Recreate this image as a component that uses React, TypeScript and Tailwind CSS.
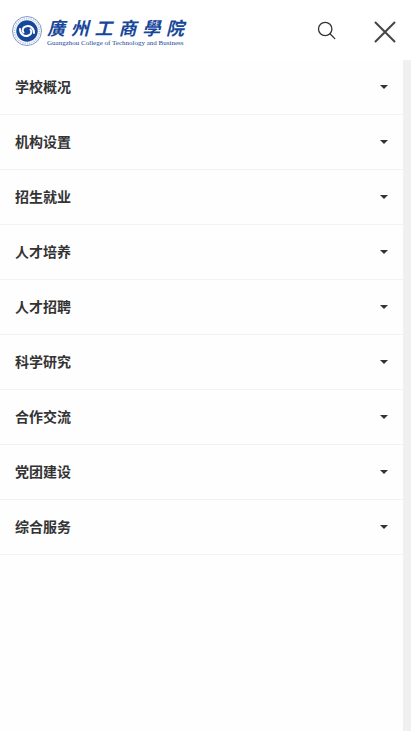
import { useState } from "react";

const MENU_ITEMS = [
    "学校概况",
    "机构设置",
    "招生就业",
    "人才培养",
    "人才招聘",
    "科学研究",
    "合作交流",
    "党团建设",
    "综合服务",
];

const SCHOOL_NAME = ["廣", "州", "工", "商", "學", "院"];

function Emblem() {
    return (
        <svg viewBox="0 0 60 60" className="size-[30px] shrink-0" aria-hidden="true">
            <circle cx="30" cy="30" r="29" fill="#fff" stroke="#5d80bb" strokeWidth="1.6" />
            <circle cx="30" cy="30" r="25" fill="none" stroke="#b9c9e3" strokeWidth="3.6" strokeDasharray="2.4 2.2" />
            <circle cx="30" cy="30" r="21.5" fill="#17479a" />
            <g fill="none" stroke="#fff" strokeWidth="4" strokeLinecap="round">
                <path d="M16 26C16 37 25 42 33 39c6-2 7-8 4-12" />
                <path d="M44 34C44 23 35 18 27 21c-6 2-7 8-4 12" />
            </g>
        </svg>
    );
}

function Logo() {
    return (
        <a href="#" className="flex items-center gap-[5px] text-[#17479a]">
            <Emblem />
            <span className="flex w-[137px] flex-col">
                <span className="flex justify-between text-[18px] leading-[24px] font-bold italic">
                    {SCHOOL_NAME.map((char) => (
                        <span key={char}>{char}</span>
                    ))}
                </span>
                <span className="font-['Liberation_Serif',serif] text-[7px] leading-[8px] whitespace-nowrap">
                    Guangzhou College of Technology and Business
                </span>
            </span>
        </a>
    );
}

export default function App() {
    const [active, setActive] = useState<string | null>(null);

    return (
        <div className="flex min-h-screen w-full flex-col bg-[#f0f0f0] font-['Noto_Sans_CJK_SC',sans-serif] text-[#333]">

            {/* Header */}
            <header className="flex h-[60px] items-center justify-between bg-white pt-0.5 pl-3">
                <Logo />
                <div className="flex items-center gap-9 pr-[14px]">
                    <button type="button" aria-label="搜索">
                        <svg viewBox="0 0 20 20" className="size-5" fill="none" stroke="#333" strokeWidth="1.3" strokeLinecap="round">
                            <circle cx="8.2" cy="8" r="6.7" />
                            <path d="M13 12.8l4.8 4.8" />
                        </svg>
                    </button>
                    <button type="button" aria-label="关闭">
                        <svg viewBox="0 0 24 24" className="size-6" fill="none" stroke="#444" strokeWidth="2" strokeLinecap="round">
                            <path d="M2.5 3.5l19 19M21.5 3.5l-19 19" />
                        </svg>
                    </button>
                </div>
            </header>

            {/* Menu panel */}
            <nav className="mr-2 flex-1 bg-[#fefefe]">
                <ul>
                    {MENU_ITEMS.map((item) => (
                        <li key={item} className="border-b border-[#f2f2f2]">
                            <button
                                type="button"
                                aria-expanded={active === item}
                                onClick={() => setActive(active === item ? null : item)}
                                className="flex h-[54px] w-full items-center justify-between px-[15px] text-sm font-bold"
                            >
                                <span className="pb-0.5">{item}</span>
                                <span className="border-x-4 border-t-4 border-x-transparent border-t-[#333]" />
                            </button>
                        </li>
                    ))}
                </ul>
            </nav>

        </div>
    );
}
